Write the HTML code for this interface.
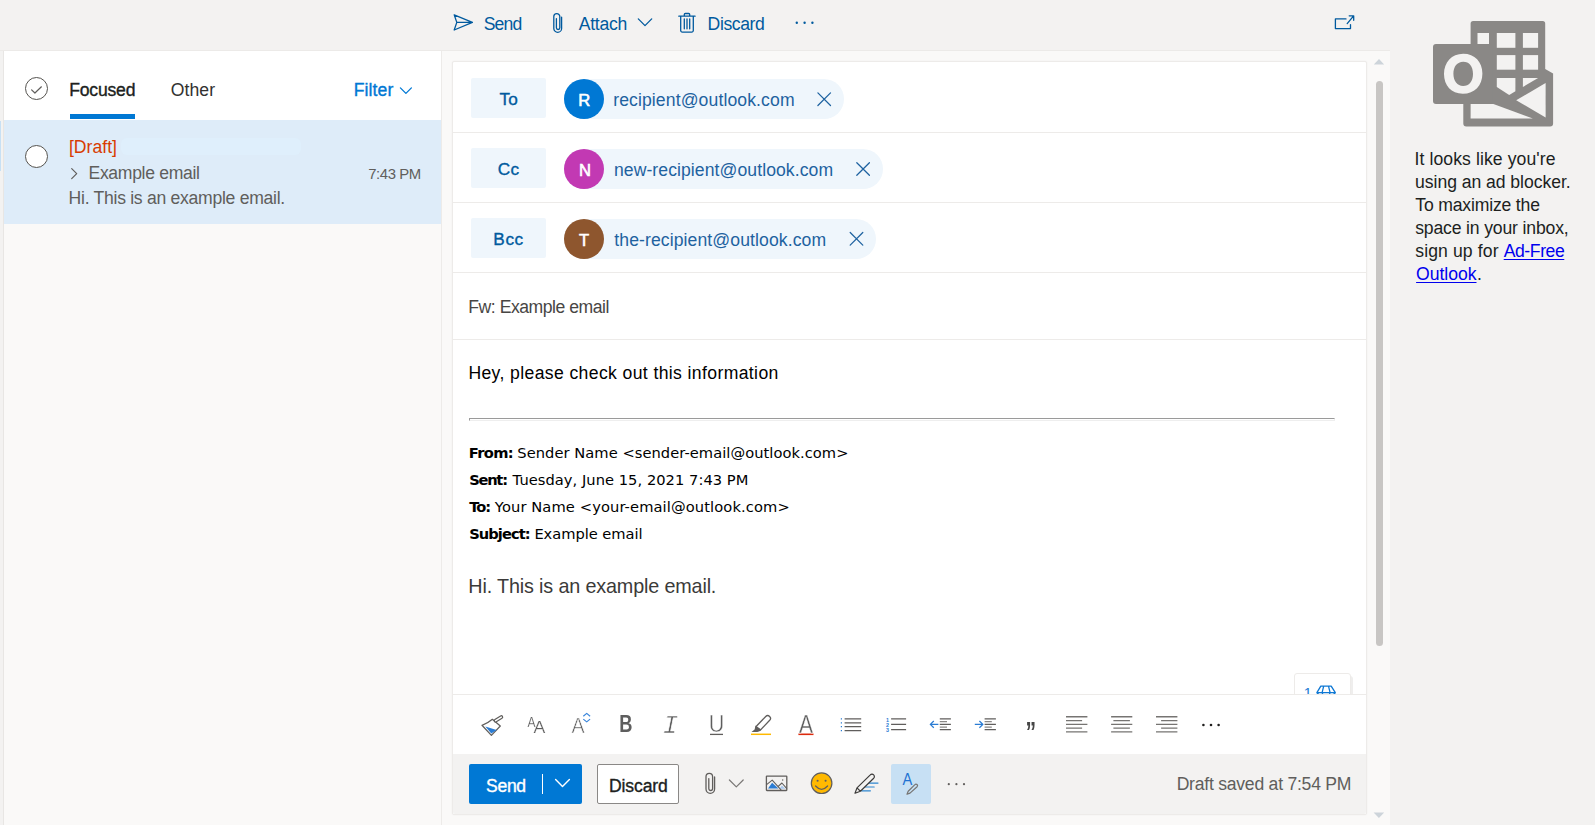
<!DOCTYPE html>
<html lang="en">
<head>
<meta charset="utf-8">
<title>Mail - Outlook</title>
<style>
*{box-sizing:border-box;margin:0;padding:0}
html,body{width:1595px;height:825px;overflow:hidden}
body{background:#f3f2f1;font-family:"Liberation Sans",sans-serif;color:#201f1e;position:relative}
.abs{position:absolute}
.t{position:absolute;white-space:nowrap;line-height:1;text-decoration:none}
a.lnk{text-decoration:underline;text-decoration-thickness:1px;text-underline-offset:2px}
#icons{position:absolute;left:0;top:0;pointer-events:none}
#topbar{left:0;top:0;width:1390px;height:51px;background:#f3f2f1;border-bottom:1px solid #eceae8}
#strip{left:0;top:51px;width:4px;height:774px;background:#f3f2f1;border-right:1px solid #e8e6e4}
#stripsel{left:0;top:121px;width:1px;height:50px;background:#c7e0f4}
#list{left:4px;top:51px;width:438px;height:774px;background:#faf9f8;border-right:1px solid #edebe9}
#listhead{left:0;top:0;width:437px;height:69px;background:#fff}
#item{left:0;top:69px;width:437px;height:104px;background:#deecf9}
#redact{left:117px;top:87px;width:180px;height:17px;background:#def0fc;border-radius:6px;opacity:.8}
#tabbar{left:66px;top:63px;width:65px;height:5px;background:#0078d4}
.circ{left:21px;width:23px;height:23px;border-radius:50%;border:1.5px solid #55534f}
#compose{left:442px;top:51px;width:948px;height:774px;background:#faf9f8}
#card{left:452px;top:61px;width:915px;height:754px;background:#fff;border:1px solid #edebe9;border-radius:2px;box-shadow:0 0 2px rgba(0,0,0,.05)}
.div{left:453px;width:913px;height:1px;background:#edebe9}
.lbl{left:471px;width:75px;height:40px;background:#eff6fc;border-radius:2px}
.pill{left:564px;height:40px;background:#eff6fc;border-radius:20px}
.av{left:564px;width:40px;height:40px;border-radius:50%}
#hr{left:469px;top:418px;width:866px;height:3px;background:#fff;border-top:1px solid #9a9a9a;border-left:1px solid #9a9a9a;border-bottom:1px solid #eee;border-right:1px solid #eee}
#widget{left:1294px;top:673px;width:57px;height:24px;overflow:hidden;background:#fff;border:1px solid #edebe9;border-radius:3px;box-shadow:2px 3px 0 #efeeed}
#fbar{left:453px;top:694px;width:913px;height:60px;background:#fff;border-top:1px solid #edebe9}
#bbar{left:453px;top:754px;width:913px;height:60px;background:#f3f2f1;border-radius:0 0 2px 2px}
#sendbtn{left:469px;top:764px;width:113px;height:40px;background:#0078d4;border-radius:2px}
#sendsep{left:542px;top:774px;width:1px;height:20px;background:#fff}
#discbtn{left:597px;top:764px;width:82px;height:40px;background:#fff;border:1px solid #8a8886;border-radius:2px}
#hl{left:891px;top:764px;width:40px;height:40px;background:#c7e0f4;border-radius:2px}
#thumb{left:1376px;top:81px;width:7px;height:565px;background:#c8c6c4;border-radius:4px}
#right{left:1390px;top:0;width:205px;height:825px;background:#f3f2f1}
.fdj{font-family:"DejaVu Sans","Liberation Sans",sans-serif}
.fser{font-family:"Liberation Serif",serif}
</style>
</head>
<body>
<div class="abs" id="topbar"></div>
<div class="abs" id="strip"></div>
<div class="abs" id="stripsel"></div>
<div class="abs" id="list">
  <div class="abs" id="listhead"></div>
  <div class="abs" id="item"></div>
  <div class="abs" id="redact"></div>
  <div class="abs" id="tabbar"></div>
  <div class="abs circ" style="top:26px"></div>
  <div class="abs circ" style="top:94px;background:#fff"></div>
</div>
<div class="abs" id="compose"></div>
<div class="abs" id="card"></div>
<div class="abs lbl" style="top:78px"></div>
<div class="abs lbl" style="top:148px"></div>
<div class="abs lbl" style="top:218px"></div>
<div class="abs pill" style="top:79px;width:280px"></div>
<div class="abs pill" style="top:149px;width:319px"></div>
<div class="abs pill" style="top:219px;width:312px"></div>
<div class="abs av" style="top:79px;background:#0078d4"></div>
<div class="abs av" style="top:149px;background:#c239b3"></div>
<div class="abs av" style="top:219px;background:#8e562e"></div>
<div class="abs div" style="top:132px"></div>
<div class="abs div" style="top:202px"></div>
<div class="abs div" style="top:272px"></div>
<div class="abs div" style="top:339px"></div>
<div class="abs" id="hr"></div>
<div class="abs" id="widget"><span class="t" style="left:8.8px;top:12px;font-size:14.5px;color:#1a7ad4">1</span><svg width="24" height="14" viewBox="0 0 24 14" style="position:absolute;left:19px;top:10px"><path d="M2.9,8.7 L6.8,2.1 H17.2 L21.3,8.7 L12.1,18 Z M2.9,8.7 H21.3 M9.7,2.1 L8.1,8.7 L12.1,18 M14.5,2.1 L16.1,8.7 L12.1,18" fill="none" stroke="#0f78d4" stroke-width="1.3" stroke-linejoin="round"/></svg></div>
<div class="abs" id="fbar"></div>
<div class="abs" id="bbar"></div>
<div class="abs" id="sendbtn"></div>
<div class="abs" id="sendsep"></div>
<div class="abs" id="discbtn"></div>
<div class="abs" id="hl"></div>
<div class="abs" id="thumb"></div>
<div class="abs" id="right"></div>

<svg id="icons" width="1595" height="825" viewBox="0 0 1595 825">
<!-- top command bar -->
<g fill="none" stroke="#005a9e" stroke-width="1.3" stroke-linejoin="round" stroke-linecap="round">
  <path d="M454.2,14.8 L472.4,22.4 L454.2,30 L456.8,22.4 Z M456.8,22.4 H470.5"/>
  <path d="M561.6,17.2 V28.4 a3.9,3.9 0 0 1 -7.8,0 V16.6 a3,3 0 0 1 6,0 V27.8 a1.7,1.7 0 0 1 -3.4,0 V18.6"/>
  <path d="M638.3,18.9 L645,25.6 L651.7,18.9"/>
  <path d="M678.8,16.2 H695.1 M684.3,16 V14.5 a1,1 0 0 1 1,-1 H688.7 a1,1 0 0 1 1,1 V16 M680.7,16.4 V30.5 a1.6,1.6 0 0 0 1.6,1.6 H691.7 a1.6,1.6 0 0 0 1.6,-1.6 V16.4 M684.3,19 V28.8 M687,19 V28.8 M689.7,19 V28.8"/>
  <path d="M1346,18.9 H1335.4 V28.6 H1350.5 V24.6 M1347.2,23.6 L1353.4,16.1 M1349.2,15.8 H1353.7 V20.3"/>
</g>
<g fill="#005a9e"><circle cx="796.8" cy="22.8" r="1.2"/><circle cx="804.6" cy="22.8" r="1.2"/><circle cx="812.4" cy="22.8" r="1.2"/></g>
<!-- list -->
<g fill="none" stroke-linecap="round" stroke-linejoin="round">
  <path d="M31.6,89.9 L34.9,93 L41.4,86.8" stroke="#605e5c" stroke-width="1.2"/>
  <path d="M400.4,87.9 L405.9,93.4 L411.4,87.9" stroke="#0078d4" stroke-width="1.3"/>
  <path d="M71.7,168.6 L76.7,173.6 L71.7,178.6" stroke="#605e5c" stroke-width="1.2"/>
</g>
<!-- recipient remove -->
<g fill="none" stroke="#1e62a0" stroke-width="1.25" stroke-linecap="round">
  <path d="M817.9,92.9 L830.5,105.5 M830.5,92.9 L817.9,105.5"/>
  <path d="M856.8,162.7 L869.4,175.3 M869.4,162.7 L856.8,175.3"/>
  <path d="M850.2,232.5 L862.8,245.1 M862.8,232.5 L850.2,245.1"/>
</g>
<!-- scrollbar arrows -->
<path d="M1373.8,64.6 L1379,59 L1384.2,64.6 Z" fill="#cdd4da"/>
<path d="M1373.6,812.6 H1384.2 L1378.9,817.9 Z" fill="#cdd4da"/>
<!-- format toolbar -->
<g id="fmt" fill="none" stroke="#605e5c" stroke-width="1.25" stroke-linecap="butt" stroke-linejoin="round">
  <!-- painter -->
  <path d="M482,725.3 Q487.5,723.5 492.4,719.3 L500.3,726 L491.4,735.4 Z" fill="#fff"/>
  <path d="M485.3,726.6 L496.6,730 L491.3,733.6 Z" fill="#2b7cd3" stroke="none"/>
  <path d="M495.6,720.7 L501.3,717.1" stroke-width="3.9" stroke-linecap="round"/>
  <path d="M495.6,720.7 L501.3,717.1" stroke="#fff" stroke-width="1.4" stroke-linecap="round"/>
  <!-- font size carets -->
  <path d="M583.3,716.3 L586.7,713.4 L590.1,716.3 M583.3,719.1 L586.7,721.9 L590.1,719.1" stroke="#3a86dc" stroke-width="1.2"/>
  <!-- underline, highlight, font color bars -->
  <path d="M710,734.4 H723" stroke-width="1.3"/>
  <path d="M751,734.3 H771" stroke="#ffb900" stroke-width="1.5"/>
  <path d="M798.4,734.3 H813.5" stroke="#dc2b0e" stroke-width="1.6"/>
  <!-- highlighter pen -->
  <path d="M758.8,727.7 L767.7,718.4" stroke-width="6.8" stroke-linecap="round"/><path d="M758.8,727.7 L767.7,718.4" stroke="#fff" stroke-width="4.2" stroke-linecap="round"/>
  <path d="M755.6,725.4 L761.6,729.8 L759.8,731 L757.4,732 H751.5 L754.6,729.4 Z" fill="#605e5c" stroke="none"/>
  <!-- bullets -->
  <path d="M844.6,718.8 H861.2 M844.6,722.8 H861.2 M844.6,726.7 H861.2 M844.6,730.7 H861.2"/>
  <path d="M840.8,718.8 H842 M840.8,722.8 H842 M840.8,726.7 H842 M840.8,730.7 H842" stroke="#2b7cd3" stroke-width="1.2"/>
  <!-- numbered lines -->
  <path d="M891.1,718.8 H906.1 M891.1,724.4 H906.1 M891.1,729.5 H906.1"/>
  <!-- outdent -->
  <path d="M939.8,718.8 H950.9 M939.8,724.4 H950.9 M939.8,729.5 H950.9"/>
  <path d="M939.8,721.6 H947 M939.8,727 H947" stroke="#8a8886"/>
  <path d="M938.4,724.4 H930.4 M933.8,721 L930.3,724.4 L933.8,727.8" stroke="#2b7cd3" stroke-width="1.3"/>
  <!-- indent -->
  <path d="M984.6,718.8 H995.9 M984.6,724.4 H995.9 M984.6,729.5 H995.9"/>
  <path d="M984.6,721.6 H991.8 M984.6,727 H991.8" stroke="#8a8886"/>
  <path d="M974.8,724.4 H982.8 M979.4,721 L982.9,724.4 L979.4,727.8" stroke="#2b7cd3" stroke-width="1.3"/>
  <!-- align left/center/right -->
  <g stroke="#767472" stroke-width="1.35">
  <path d="M1066,716.7 H1087.4 M1066,720.6 H1082.1 M1066,724.3 H1087.4 M1066,728.1 H1082.1 M1066,731.9 H1087.4"/>
  <path d="M1111.1,716.7 H1132.3 M1113.4,720.6 H1129.9 M1111.1,724.3 H1132.3 M1113.4,728.1 H1129.9 M1111.1,731.9 H1132.3"/>
  <path d="M1156,716.7 H1177.4 M1161.1,720.6 H1177.4 M1156,724.3 H1177.4 M1161.1,728.1 H1177.4 M1156,731.9 H1177.4"/>
  </g>
</g>
<g fill="#201f1e"><circle cx="1203.4" cy="725" r="1.3"/><circle cx="1211" cy="725" r="1.3"/><circle cx="1218.6" cy="725" r="1.3"/></g>
<!-- letter-like toolbar icons as real text -->
<g font-family="Liberation Sans, sans-serif" fill="#605e5c" style="filter:grayscale(1)">
  <text x="527.6" y="726.8" font-size="14.2" textLength="8" lengthAdjust="spacingAndGlyphs" stroke="#fff" stroke-width=".15">A</text>
  <text x="533.4" y="732.8" font-size="17.2" textLength="11.8" lengthAdjust="spacingAndGlyphs" stroke="#fff" stroke-width=".2">A</text>
  <text x="571.6" y="732.8" font-size="21.8" textLength="13.2" lengthAdjust="spacingAndGlyphs" stroke="#fff" stroke-width=".6">A</text>
  <text x="619.2" y="732.3" font-size="23.4" font-weight="700" textLength="13.2" lengthAdjust="spacingAndGlyphs">B</text>
  <text x="708.7" y="732.3" font-size="23.8" textLength="15.6" lengthAdjust="spacingAndGlyphs" stroke="#fff" stroke-width=".45">U</text>
  <text x="799.1" y="732.8" font-size="25.2" textLength="14" lengthAdjust="spacingAndGlyphs" stroke="#fff" stroke-width=".3">A</text>
  <text x="1025.4" y="740.6" font-size="27.5" font-weight="700" fill="#484644" textLength="10.6" lengthAdjust="spacingAndGlyphs">”</text>
</g>
<text x="662.6" y="732.5" font-family="Liberation Mono, monospace" font-style="italic" font-size="26.5" fill="#605e5c" stroke="#fff" stroke-width=".7" style="filter:grayscale(1)">I</text>
<g font-family="Liberation Sans, sans-serif" fill="#2b7cd3" font-size="5.4" font-weight="700">
  <text x="886" y="721.6">1</text><text x="886" y="726.8">2</text><text x="886" y="732.2">3</text>
</g>
<!-- bottom bar -->
<g fill="none" stroke="#605e5c" stroke-width="1.3" stroke-linecap="round" stroke-linejoin="round">
  <path d="M555.6,779.6 L562.5,786.6 L569.4,779.6" stroke="#fff" stroke-width="1.4"/>
  <path d="M714.6,777 V789.1 a4.3,4.3 0 0 1 -8.6,0 V776.7 a3.3,3.3 0 0 1 6.6,0 V788.6 a1.9,1.9 0 0 1 -3.8,0 V778.6"/>
  <path d="M729.4,780 L736.3,786.9 L743.2,780" stroke="#7a7876" stroke-width="1.2"/>
  <!-- picture -->
  <path d="M768,788.6 L772.1,782.8 L778.4,788.6 Z" fill="#2b7cd3" stroke="none"/>
  <path d="M779.6,788.8 L781.9,785.4 L785.4,788.8 Z" fill="#a9c9ef" stroke="none"/>
  <rect x="766.4" y="776.1" width="20.4" height="14.4" rx=".5"/>
  <path d="M766.6,784.6 L772.2,780.1 L781,789.9 M778.2,786.3 L781.9,783 L786.6,788.4" stroke-width="1.1"/>
  <circle cx="782.7" cy="780" r=".7" fill="#605e5c" stroke="none"/>
  <!-- emoji -->
  <circle cx="821.6" cy="783.2" r="10.3" fill="#ffb900" stroke-width="1.2"/>
  <circle cx="817.6" cy="780.8" r="1.05" fill="#605e5c" stroke="none"/><circle cx="825.6" cy="780.8" r="1.05" fill="#605e5c" stroke="none"/>
  <path d="M815.6,786 Q821.6,792.6 827.6,786" stroke-width="1.25"/>
  <!-- signature pen -->
  <path d="M867,783.1 H878 M864.6,787 H874.2 M861.6,790.8 H870.4" stroke="#2e86d0" stroke-width="1.2"/>
  <path d="M855,793.2 L857,787.9 L870.3,774.9 a2.3,2.3 0 0 1 3.4,3.3 L860.4,791.2 Z M857,787.9 L860.4,791.2" stroke="#3b3a39" stroke-width="1.2" fill="#f3f2f1"/>
  <!-- A with pencil -->
  <path d="M907,794.2 L908.2,791.2 L914.9,784.6 a1.5,1.5 0 0 1 2.2,2.1 L910,793.1 Z" stroke="#767472" stroke-width="1.2" fill="#c7e0f4"/>
</g>
<text x="902.6" y="785.4" font-family="Liberation Sans, sans-serif" font-size="16" fill="#1f72d2" textLength="9.8" lengthAdjust="spacingAndGlyphs">A</text>
<g fill="#605e5c"><circle cx="948.8" cy="784.2" r="1.1"/><circle cx="956.4" cy="784.2" r="1.1"/><circle cx="964" cy="784.2" r="1.1"/></g>
<!-- outlook logo (ad placeholder) -->
<g id="ologo">
  <path d="M1470.6,23.6 a2.5,2.5 0 0 1 2.5,-2.5 H1542.7 a2.5,2.5 0 0 1 2.5,2.5 V69 L1553.1,73.4 V123.4 a3,3 0 0 1 -3,3 H1466.3 a3,3 0 0 1 -3,-3 V100 H1470.6 Z" fill="#8a8886"/>
  <rect x="1433" y="44" width="59.9" height="60.1" rx="3" fill="#8a8886"/>
  <g fill="#f3f2f1">
    <rect x="1477.5" y="33" width="11.5" height="11"/>
    <rect x="1496.8" y="33" width="18.6" height="14.8"/>
    <rect x="1522.9" y="33" width="15.2" height="14.8"/>
    <rect x="1496.8" y="55.1" width="18.6" height="14.6"/>
    <rect x="1522.9" y="55.1" width="15.2" height="14.6"/>
    <path d="M1496.8,78 H1515.4 V91.2 L1509.2,94.9 L1496.8,87 Z"/>
    <path d="M1522.9,78 H1538.1 L1522.9,87 Z"/>
    <path d="M1470.6,104.1 H1493.4 L1532.8,118.6 H1470.6 Z"/>
    <path d="M1516.2,100.2 L1545.6,83 V117.6 Z"/>
  </g>
  <path fill="#f3f2f1" fill-rule="evenodd" d="M1463.2,53.7 c11.6,0 19.2,8.2 19.2,19.8 c0,12 -7.8,20.3 -19.6,20.3 c-11.4,0 -18.8,-8.3 -18.8,-19.7 c0,-12 7.6,-20.4 19.200000000000003,-20.4 Z M1463.2,61.8 c-6,0 -9.8,4.9 -9.8,12 c0,7.200000000000003 3.9,12.100000000000001 9.7,12.100000000000001 c6,0 9.9,-4.7 9.9,-12 c0,-7.5 -3.7,-12.100000000000001 -9.8,-12.100000000000001 Z"/>
</g>

</svg>
<div id="texts">
<span class="t " style="left:483.66px;top:16.10px;font-size:17.6px;color:#005a9e;letter-spacing:-0.860px">Send</span>
<span class="t " style="left:578.63px;top:16.10px;font-size:17.6px;color:#005a9e;letter-spacing:-0.231px">Attach</span>
<span class="t " style="left:707.61px;top:16.10px;font-size:17.6px;color:#005a9e;letter-spacing:-0.406px">Discard</span>
<span class="t " style="left:69.18px;top:82.10px;font-size:17.6px;-webkit-text-stroke:0.35px #201f1e;color:#201f1e;letter-spacing:-0.200px">Focused</span>
<span class="t " style="left:170.70px;top:82.10px;font-size:17.6px;color:#323130;letter-spacing:0.106px">Other</span>
<span class="t " style="left:353.68px;top:81.60px;font-size:17.6px;-webkit-text-stroke:0.35px #0078d4;color:#0078d4;letter-spacing:0.113px">Filter</span>
<span class="t " style="left:68.88px;top:138.90px;font-size:17.6px;color:#d83b01;letter-spacing:0.032px">[Draft]</span>
<span class="t " style="left:88.49px;top:164.90px;font-size:17.6px;color:#605e5c;letter-spacing:-0.329px">Example email</span>
<span class="t " style="left:368.15px;top:167.19px;font-size:14.9px;color:#605e5c;letter-spacing:-0.397px">7:43 PM</span>
<span class="t " style="left:68.61px;top:189.70px;font-size:17.6px;color:#605e5c;letter-spacing:-0.285px">Hi. This is an example email.</span>
<span class="t " style="left:499.61px;top:91.44px;font-size:17.2px;-webkit-text-stroke:0.35px #005a9e;color:#005a9e;letter-spacing:0.131px">To</span>
<span class="t " style="left:497.79px;top:161.44px;font-size:17.2px;-webkit-text-stroke:0.35px #005a9e;color:#005a9e;letter-spacing:0.360px">Cc</span>
<span class="t " style="left:493.32px;top:231.44px;font-size:17.2px;-webkit-text-stroke:0.35px #005a9e;color:#005a9e;letter-spacing:0.608px">Bcc</span>
<span class="t " style="left:578.17px;top:92.75px;font-size:16.6px;-webkit-text-stroke:0.6px #fff;color:#fff;letter-spacing:0.000px">R</span>
<span class="t " style="left:578.97px;top:162.75px;font-size:16.6px;-webkit-text-stroke:0.6px #fff;color:#fff;letter-spacing:0.000px">N</span>
<span class="t " style="left:579.04px;top:232.75px;font-size:16.6px;-webkit-text-stroke:0.6px #fff;color:#fff;letter-spacing:0.000px">T</span>
<span class="t " style="left:613.19px;top:91.60px;font-size:17.6px;color:#1e62a0;letter-spacing:0.107px">recipient@outlook.com</span>
<span class="t " style="left:613.95px;top:161.60px;font-size:17.6px;color:#1e62a0;letter-spacing:0.074px">new-recipient@outlook.com</span>
<span class="t " style="left:614.27px;top:231.60px;font-size:17.6px;color:#1e62a0;letter-spacing:0.095px">the-recipient@outlook.com</span>
<span class="t " style="left:468.27px;top:299.00px;font-size:17.6px;color:#484644;letter-spacing:-0.463px">Fw: Example email</span>
<span class="t " style="left:468.39px;top:365.40px;font-size:17.6px;color:#000;letter-spacing:0.378px">Hey, please check out this information</span>
<span class="t fdj" style="left:468.85px;top:446.19px;font-size:14.67px;font-weight:700;color:#000;letter-spacing:-0.661px">From:</span>
<span class="t fdj" style="left:517.33px;top:446.19px;font-size:14.67px;color:#000;letter-spacing:0.050px">Sender Name &lt;sender-email@outlook.com&gt;</span>
<span class="t fdj" style="left:469.14px;top:473.19px;font-size:14.67px;font-weight:700;color:#000;letter-spacing:-1.230px">Sent:</span>
<span class="t fdj" style="left:512.61px;top:473.19px;font-size:14.67px;color:#000;letter-spacing:0.044px">Tuesday, June 15, 2021 7:43 PM</span>
<span class="t fdj" style="left:469.36px;top:500.19px;font-size:14.67px;font-weight:700;color:#000;letter-spacing:-1.121px">To:</span>
<span class="t fdj" style="left:494.81px;top:500.19px;font-size:14.67px;color:#000;letter-spacing:0.111px">Your Name &lt;your-email@outlook.com&gt;</span>
<span class="t fdj" style="left:469.14px;top:527.19px;font-size:14.67px;font-weight:700;color:#000;letter-spacing:-0.931px">Subject:</span>
<span class="t fdj" style="left:534.40px;top:527.19px;font-size:14.67px;color:#000;letter-spacing:-0.043px">Example email</span>
<span class="t " style="left:468.34px;top:576.74px;font-size:19.8px;color:#3b3a39;letter-spacing:-0.159px">Hi. This is an example email.</span>
<span class="t " style="left:486.12px;top:778.10px;font-size:17.6px;-webkit-text-stroke:0.35px #fff;color:#fff;letter-spacing:-0.355px">Send</span>
<span class="t " style="left:609.01px;top:778.10px;font-size:17.6px;-webkit-text-stroke:0.35px #201f1e;color:#201f1e;letter-spacing:-0.140px">Discard</span>
<span class="t " style="left:1176.65px;top:776.10px;font-size:17.6px;color:#605e5c;letter-spacing:-0.242px">Draft saved at 7:54 PM</span>
<span class="t " style="left:1414.47px;top:150.80px;font-size:17.6px;color:#201f1e;letter-spacing:0.089px">It looks like you&#x27;re</span>
<span class="t " style="left:1415.07px;top:173.80px;font-size:17.6px;color:#201f1e;letter-spacing:-0.048px">using an ad blocker.</span>
<span class="t " style="left:1415.31px;top:196.80px;font-size:17.6px;color:#201f1e;letter-spacing:-0.176px">To maximize the</span>
<span class="t " style="left:1415.22px;top:219.80px;font-size:17.6px;color:#201f1e;letter-spacing:-0.158px">space in your inbox,</span>
<span class="t " style="left:1415.22px;top:242.80px;font-size:17.6px;color:#201f1e;letter-spacing:0.116px">sign up for</span>
<a href="#" class="t lnk" style="left:1503.70px;top:242.80px;font-size:17.6px;color:#0000ee;letter-spacing:-0.422px">Ad-Free</a>
<a href="#" class="t lnk" style="left:1416.10px;top:265.70px;font-size:17.6px;color:#0000ee;letter-spacing:-0.033px">Outlook</a>
<span class="t " style="left:1477.08px;top:265.70px;font-size:17.6px;color:#201f1e;letter-spacing:0.000px">.</span>
</div>
</body>
</html>
